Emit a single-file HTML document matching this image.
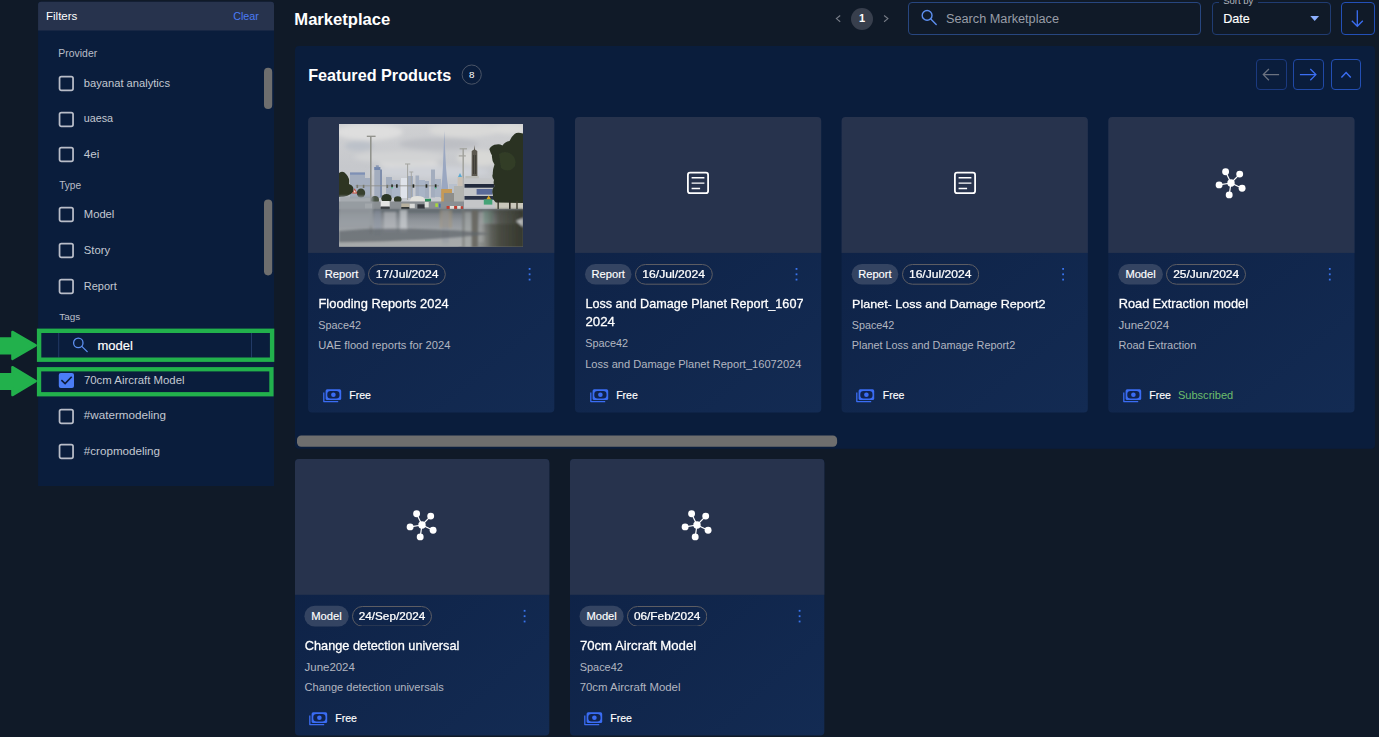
<!DOCTYPE html>
    <html><head><meta charset="utf-8"><title>Marketplace</title>
    <style>
    html,body{margin:0;padding:0;}
    body{width:1379px;height:737px;overflow:hidden;position:relative;background:#101a28;
     font-family:"Liberation Sans",sans-serif;}
    .t{position:absolute;white-space:nowrap;line-height:1;}
.m{-webkit-text-stroke:0.16px currentColor;}
.sb{-webkit-text-stroke:0.5px currentColor;}
.m2{-webkit-text-stroke:0.28px currentColor;}
    .abs{position:absolute;}
    .cb{position:absolute;width:15.2px;height:15.2px;box-sizing:border-box;border:1.6px solid #bfc3cb;border-radius:2.5px;}
    .card{position:absolute;border-radius:4px;overflow:hidden;background:linear-gradient(160deg,#0e2148 0%,#10254f 50%,#142b5c 100%);}
    .card .img{position:absolute;left:0;top:0;right:0;height:135.5px;background:#27334d;}
    .chip{position:absolute;height:20.7px;border-radius:10.4px;box-sizing:border-box;}
    .btn{position:absolute;box-sizing:border-box;border:1px solid #1f47a0;border-radius:4px;}
    </style></head><body>
    
<svg class="abs" style="left:0;top:0" width="1379" height="737" viewBox="0 0 1379 737"><defs><linearGradient id="cg10" gradientUnits="userSpaceOnUse" x1="308.1" y1="117.4" x2="554.3" y2="412.4"><stop offset="0" stop-color="#0d2043"/><stop offset="1" stop-color="#132b53"/></linearGradient><linearGradient id="cg15" gradientUnits="userSpaceOnUse" x1="575.0" y1="117.4" x2="821.2" y2="412.4"><stop offset="0" stop-color="#0d2043"/><stop offset="1" stop-color="#132b53"/></linearGradient><linearGradient id="cg20" gradientUnits="userSpaceOnUse" x1="841.6" y1="117.4" x2="1087.8" y2="412.4"><stop offset="0" stop-color="#0d2043"/><stop offset="1" stop-color="#132b53"/></linearGradient><linearGradient id="cg25" gradientUnits="userSpaceOnUse" x1="1108.3" y1="117.4" x2="1354.5" y2="412.4"><stop offset="0" stop-color="#0d2043"/><stop offset="1" stop-color="#132b53"/></linearGradient><linearGradient id="cg30" gradientUnits="userSpaceOnUse" x1="295.0" y1="459.3" x2="549.3" y2="735.6"><stop offset="0" stop-color="#0d2043"/><stop offset="1" stop-color="#132b53"/></linearGradient><linearGradient id="cg35" gradientUnits="userSpaceOnUse" x1="570.0" y1="459.3" x2="824.3" y2="735.6"><stop offset="0" stop-color="#0d2043"/><stop offset="1" stop-color="#132b53"/></linearGradient></defs><path d="M38.1 486.1 V4.8 a3 3 0 0 1 3 -3 H271 a3 3 0 0 1 3 3 V486.1 Z" fill="#0a1d3c"/>
<path d="M38.1 30.4 V4.8 a3 3 0 0 1 3 -3 H271 a3 3 0 0 1 3 3 V30.4 Z" fill="#27334d"/>
<rect x="264" y="67.8" width="8.2" height="41.2" rx="4.1" fill="#6e6e6e"/>
<rect x="264" y="199.5" width="8.2" height="75.9" rx="4.1" fill="#6e6e6e"/>
<rect x="58.2" y="333" width="1" height="24.5" fill="#223a66"/>
<rect x="251" y="333" width="1" height="24.5" fill="#223a66"/>
<rect x="58.8" y="373.1" width="15.2" height="14.9" rx="2" fill="#4b7df6"/>
<rect x="295" y="46" width="1080" height="402.8" rx="4" fill="#0a1d3c"/>
<circle cx="471.7" cy="74.6" r="9.6" fill="none" stroke="#4a5466" stroke-width="1"/>
<rect x="297" y="435.6" width="540.1" height="11.1" rx="4.2" fill="#6e6e6e"/>
<clipPath id="cc10"><rect x="308.1" y="117.0" width="246.2" height="295.4" rx="4"/></clipPath><g clip-path="url(#cc10)"><rect x="305.1" y="114.4" width="252.2" height="301.0" fill="url(#cg10)"/><rect x="305.1" y="114.4" width="252.2" height="138.5" fill="#27334d"/></g>
<rect x="318.1" y="263.9" width="46.9" height="20.7" rx="10.35" fill="#344462"/>
<rect x="528.6999999999999" y="268.0" width="1.8" height="1.8" fill="#3873ec"/>
<rect x="528.6999999999999" y="273.40000000000003" width="1.8" height="1.8" fill="#3873ec"/>
<rect x="528.6999999999999" y="278.70000000000005" width="1.8" height="1.8" fill="#3873ec"/>
<clipPath id="cc15"><rect x="575.0" y="117.0" width="246.2" height="295.4" rx="4"/></clipPath><g clip-path="url(#cc15)"><rect x="572.0" y="114.4" width="252.2" height="301.0" fill="url(#cg15)"/><rect x="572.0" y="114.4" width="252.2" height="138.5" fill="#27334d"/></g>
<rect x="585.0" y="263.9" width="46.5" height="20.7" rx="10.35" fill="#344462"/>
<rect x="795.6" y="268.0" width="1.8" height="1.8" fill="#3873ec"/>
<rect x="795.6" y="273.40000000000003" width="1.8" height="1.8" fill="#3873ec"/>
<rect x="795.6" y="278.70000000000005" width="1.8" height="1.8" fill="#3873ec"/>
<clipPath id="cc20"><rect x="841.6" y="117.0" width="246.2" height="295.4" rx="4"/></clipPath><g clip-path="url(#cc20)"><rect x="838.6" y="114.4" width="252.2" height="301.0" fill="url(#cg20)"/><rect x="838.6" y="114.4" width="252.2" height="138.5" fill="#27334d"/></g>
<rect x="851.6" y="263.9" width="46.7" height="20.7" rx="10.35" fill="#344462"/>
<rect x="1062.1999999999998" y="268.0" width="1.8" height="1.8" fill="#3873ec"/>
<rect x="1062.1999999999998" y="273.40000000000003" width="1.8" height="1.8" fill="#3873ec"/>
<rect x="1062.1999999999998" y="278.70000000000005" width="1.8" height="1.8" fill="#3873ec"/>
<clipPath id="cc25"><rect x="1108.3" y="117.0" width="246.2" height="295.4" rx="4"/></clipPath><g clip-path="url(#cc25)"><rect x="1105.3" y="114.4" width="252.2" height="301.0" fill="url(#cg25)"/><rect x="1105.3" y="114.4" width="252.2" height="138.5" fill="#27334d"/></g>
<rect x="1118.3" y="263.9" width="44.6" height="20.7" rx="10.35" fill="#344462"/>
<rect x="1328.8999999999999" y="268.0" width="1.8" height="1.8" fill="#3873ec"/>
<rect x="1328.8999999999999" y="273.40000000000003" width="1.8" height="1.8" fill="#3873ec"/>
<rect x="1328.8999999999999" y="278.70000000000005" width="1.8" height="1.8" fill="#3873ec"/>
<clipPath id="cc30"><rect x="295.0" y="458.90000000000003" width="254.3" height="276.7" rx="4"/></clipPath><g clip-path="url(#cc30)"><rect x="292.0" y="456.3" width="260.3" height="282.3" fill="url(#cg30)"/><rect x="292.0" y="456.3" width="260.3" height="138.5" fill="#27334d"/></g>
<rect x="304.40000000000003" y="605.8" width="44.3" height="20.7" rx="10.35" fill="#344462"/>
<rect x="523.6999999999999" y="609.9" width="1.8" height="1.8" fill="#3873ec"/>
<rect x="523.6999999999999" y="615.3000000000001" width="1.8" height="1.8" fill="#3873ec"/>
<rect x="523.6999999999999" y="620.6" width="1.8" height="1.8" fill="#3873ec"/>
<clipPath id="cc35"><rect x="570.0" y="458.90000000000003" width="254.3" height="276.7" rx="4"/></clipPath><g clip-path="url(#cc35)"><rect x="567.0" y="456.3" width="260.3" height="282.3" fill="url(#cg35)"/><rect x="567.0" y="456.3" width="260.3" height="138.5" fill="#27334d"/></g>
<rect x="579.5" y="605.8" width="44.2" height="20.7" rx="10.35" fill="#344462"/>
<rect x="798.6999999999999" y="609.9" width="1.8" height="1.8" fill="#3873ec"/>
<rect x="798.6999999999999" y="615.3000000000001" width="1.8" height="1.8" fill="#3873ec"/>
<rect x="798.6999999999999" y="620.6" width="1.8" height="1.8" fill="#3873ec"/></svg>
<div class="t" style="left:46.00px;top:11px;font-size:11.5px;color:#fff;font-weight:400;">Filters</div>
<div class="t" style="left:233.20px;top:11px;font-size:10.71px;color:#4b7bf5;font-weight:400;">Clear</div>
<div class="t" style="left:58.30px;top:49px;font-size:10.45px;color:#b9bec8;font-weight:400;">Provider</div>
<div class="t" style="left:59.20px;top:181px;font-size:10.1px;color:#b9bec8;font-weight:400;">Type</div>
<div class="t" style="left:59.20px;top:312px;font-size:9.94px;color:#b9bec8;font-weight:400;">Tags</div>
<svg class="abs" style="left:57px;top:73.8px" width="19" height="20" viewBox="0 0 19 20"><rect x="2.55" y="2.5" width="13.5" height="13.8" rx="1.8" fill="none" stroke="#b9bdc8" stroke-width="1.75"/></svg>
<div class="t" style="left:83.80px;top:78px;font-size:11.17px;color:#c3c8d1;font-weight:400;">bayanat analytics</div>
<svg class="abs" style="left:57px;top:109.5px" width="19" height="20" viewBox="0 0 19 20"><rect x="2.55" y="2.5" width="13.5" height="13.8" rx="1.8" fill="none" stroke="#b9bdc8" stroke-width="1.75"/></svg>
<div class="t" style="left:83.80px;top:113px;font-size:10.75px;color:#c3c8d1;font-weight:400;">uaesa</div>
<svg class="abs" style="left:57px;top:145.1px" width="19" height="20" viewBox="0 0 19 20"><rect x="2.55" y="2.5" width="13.5" height="13.8" rx="1.8" fill="none" stroke="#b9bdc8" stroke-width="1.75"/></svg>
<div class="t" style="left:83.80px;top:148px;font-size:11.69px;color:#c3c8d1;font-weight:400;">4ei</div>
<svg class="abs" style="left:57px;top:205.2px" width="19" height="20" viewBox="0 0 19 20"><rect x="2.55" y="2.5" width="13.5" height="13.8" rx="1.8" fill="none" stroke="#b9bdc8" stroke-width="1.75"/></svg>
<div class="t" style="left:83.80px;top:209px;font-size:11.23px;color:#c3c8d1;font-weight:400;">Model</div>
<svg class="abs" style="left:57px;top:241.0px" width="19" height="20" viewBox="0 0 19 20"><rect x="2.55" y="2.5" width="13.5" height="13.8" rx="1.8" fill="none" stroke="#b9bdc8" stroke-width="1.75"/></svg>
<div class="t" style="left:83.80px;top:245px;font-size:11.27px;color:#c3c8d1;font-weight:400;">Story</div>
<svg class="abs" style="left:57px;top:276.7px" width="19" height="20" viewBox="0 0 19 20"><rect x="2.55" y="2.5" width="13.5" height="13.8" rx="1.8" fill="none" stroke="#b9bdc8" stroke-width="1.75"/></svg>
<div class="t" style="left:83.80px;top:281px;font-size:10.99px;color:#c3c8d1;font-weight:400;">Report</div>
<svg class="abs" style="left:57px;top:406.5px" width="19" height="20" viewBox="0 0 19 20"><rect x="2.55" y="2.5" width="13.5" height="13.8" rx="1.8" fill="none" stroke="#b9bdc8" stroke-width="1.75"/></svg>
<div class="t" style="left:83.80px;top:409px;font-size:11.66px;color:#c3c8d1;font-weight:400;">#watermodeling</div>
<svg class="abs" style="left:57px;top:442.2px" width="19" height="20" viewBox="0 0 19 20"><rect x="2.55" y="2.5" width="13.5" height="13.8" rx="1.8" fill="none" stroke="#b9bdc8" stroke-width="1.75"/></svg>
<div class="t" style="left:83.80px;top:445px;font-size:11.63px;color:#c3c8d1;font-weight:400;">#cropmodeling</div>
<svg class="abs" style="left:70px;top:336px" width="20" height="20" viewBox="0 0 20 20"><circle cx="8.3" cy="6.9" r="4.7" fill="none" stroke="#5d8ff0" stroke-width="1.3"/><path d="M11.8 10.4 L17.2 15.6" stroke="#5d8ff0" stroke-width="1.3" stroke-linecap="round"/></svg>
<div class="t m" style="left:97.50px;top:339px;font-size:13.03px;color:#fff;font-weight:400;">model</div>
<svg class="abs" style="left:58.8px;top:373px" width="15.2" height="15" viewBox="0 0 15.2 15"><path d="M2.4 7.2 L6.1 10.6 L12.7 3.7" fill="none" stroke="#0c1a3a" stroke-width="1.6"/></svg>
<div class="t" style="left:83.90px;top:375px;font-size:11.4px;color:#c3c8d1;font-weight:400;">70cm Aircraft Model</div>
<div class="t" style="left:294.30px;top:12px;font-size:16.61px;color:#fff;font-weight:700;">Marketplace</div>
<svg class="abs" style="left:832px;top:10px" width="60" height="18" viewBox="0 0 60 18"><path d="M8.2 5.5 L4.4 8.6 L8.2 11.7" fill="none" stroke="#777c87" stroke-width="1.1"/><path d="M52.1 5.5 L55.9 8.6 L52.1 11.7" fill="none" stroke="#777c87" stroke-width="1.1"/></svg>
<div class="abs" style="left:850.9px;top:7.6px;width:22px;height:22px;border-radius:11px;background:#383f4d"></div>
<div class="t" style="left:858.90px;top:13px;font-size:11px;color:#fff;font-weight:700;">1</div>
<div class="abs" style="left:908.3px;top:1.7px;width:293px;height:33px;box-sizing:border-box;border:1px solid #27467f;border-radius:4px;"></div>
<svg class="abs" style="left:918px;top:6px" width="24" height="24" viewBox="0 0 24 24"><circle cx="9.1" cy="9.4" r="4.9" fill="none" stroke="#5d8ff0" stroke-width="1.4"/><path d="M12.8 13 L18.2 18.4" stroke="#5d8ff0" stroke-width="1.4" stroke-linecap="round"/></svg>
<div class="t" style="left:946.00px;top:13px;font-size:12.71px;color:#989da7;font-weight:400;">Search Marketplace</div>
<div class="abs" style="left:1212px;top:1.7px;width:119px;height:33px;box-sizing:border-box;border:1px solid #203c72;border-radius:4px;"></div>
<div class="abs" style="left:1219.4px;top:0;width:38.3px;height:4px;background:#101a28"></div>
<div class="t" style="left:1223.20px;top:-4px;font-size:9.5px;color:#b0b5be;font-weight:400;">Sort by</div>
<div class="t m" style="left:1223.20px;top:13px;font-size:12.64px;color:#fff;font-weight:400;">Date</div>
<svg class="abs" style="left:1308px;top:14px" width="14" height="10" viewBox="0 0 14 10"><path d="M2.3 2 L11.1 2 L6.7 7.1 Z" fill="#8db0ff"/></svg>
<div class="btn" style="left:1341px;top:1.7px;width:34px;height:33.7px;border-color:#2350b8"></div>
<svg class="abs" style="left:1345px;top:6px" width="26" height="26" viewBox="0 0 26 26"><path d="M12.3 4.3 L12.3 20.2 M6.8 14.8 L12.3 20.3 L17.8 14.8" fill="none" stroke="#3b6ef2" stroke-width="1.3"/></svg>
<div class="t" style="left:308.20px;top:67px;font-size:16.19px;color:#fff;font-weight:700;">Featured Products</div>
<div class="t" style="left:469.00px;top:70px;font-size:9.8px;color:#fff;font-weight:400;">8</div>
<div class="btn" style="left:1256px;top:59px;width:30.8px;height:31px;border-color:#1b3a80"></div>
<div class="btn" style="left:1293.1px;top:59px;width:30.8px;height:31px;border-color:#2049a6"></div>
<div class="btn" style="left:1330.5px;top:59px;width:30.6px;height:31px;border-color:#234fb4"></div>
<svg class="abs" style="left:1256px;top:59px" width="31" height="31" viewBox="0 0 31 31"><path d="M23.1 15.6 L7.3 15.6 M12.9 10 L7.3 15.6 L12.9 21.2" fill="none" stroke="#6b7280" stroke-width="1.3"/></svg>
<svg class="abs" style="left:1293px;top:59px" width="31" height="31" viewBox="0 0 31 31"><path d="M6.9 15.6 L22.9 15.6 M17.3 10 L22.9 15.6 L17.3 21.2" fill="none" stroke="#3b6ef2" stroke-width="1.3"/></svg>
<svg class="abs" style="left:1330.5px;top:59px" width="31" height="31" viewBox="0 0 31 31"><path d="M10.4 18.6 L15.1 13.6 L19.8 18.6" fill="none" stroke="#3b6ef2" stroke-width="1.4"/></svg>
<svg class="abs" style="left:339px;top:124px" width="184" height="122.8" viewBox="0 0 184 122.8" preserveAspectRatio="none">
<defs>
<linearGradient id="sky" x1="0" y1="0" x2="0" y2="1"><stop offset="0" stop-color="#cfd0d2"/><stop offset="0.5" stop-color="#c6c8cc"/><stop offset="1" stop-color="#c9ccd2"/></linearGradient>
<linearGradient id="wat" x1="0" y1="0" x2="0" y2="1"><stop offset="0" stop-color="#6a7075"/><stop offset="0.3" stop-color="#8f949a"/><stop offset="0.6" stop-color="#a3a7aa"/><stop offset="1" stop-color="#a9abab"/></linearGradient>
<linearGradient id="drk" x1="0" y1="0" x2="1" y2="0"><stop offset="0" stop-color="#45473d" stop-opacity="0"/><stop offset="0.35" stop-color="#45473d" stop-opacity="0.8"/><stop offset="1" stop-color="#33352b" stop-opacity="0.95"/></linearGradient>
<filter id="b1" x="-5%" y="-5%" width="110%" height="110%"><feGaussianBlur stdDeviation="0.45"/></filter>
<filter id="b2" x="-10%" y="-10%" width="120%" height="120%"><feGaussianBlur stdDeviation="2.2"/></filter>
<filter id="b3" x="-10%" y="-10%" width="120%" height="120%"><feGaussianBlur stdDeviation="1.1"/></filter>
<clipPath id="pc"><rect width="184" height="122.8"/></clipPath>
</defs>
<g clip-path="url(#pc)">
<rect width="184" height="86" fill="url(#sky)"/>
<!-- clouds -->
<g filter="url(#b2)">
<ellipse cx="30" cy="8" rx="34" ry="8" fill="#dedede"/><ellipse cx="70" cy="40" rx="30" ry="5" fill="#dadada"/>
<ellipse cx="100" cy="20" rx="40" ry="6" fill="#bdbfc4"/>
<ellipse cx="125" cy="6" rx="35" ry="7" fill="#d9d9d8"/>
<ellipse cx="60" cy="33" rx="45" ry="6" fill="#d2d3d4"/>
<ellipse cx="20" cy="22" rx="14" ry="5" fill="#bcc1c9"/>
<ellipse cx="140" cy="34" rx="22" ry="8" fill="#d8d8d6"/>
<ellipse cx="90" cy="48" rx="60" ry="6" fill="#cfd2d8"/>
<ellipse cx="170" cy="5" rx="18" ry="5" fill="#dcdcda"/>
</g>
<g filter="url(#b1)">
<!-- far skyline -->
<g fill="#a3adbe">
<rect x="11" y="48.5" width="15" height="26"/><rect x="26" y="54" width="5" height="20"/>
<rect x="35.3" y="43" width="6" height="31"/><rect x="41" y="45.5" width="2" height="28" fill="#7f8eac"/>
<rect x="47" y="53" width="6" height="20"/><rect x="53" y="56" width="8" height="18" fill="#aab5c8"/>
<rect x="62" y="54" width="6" height="20" fill="#dfe3ea"/><rect x="68" y="52" width="6" height="22"/>
<rect x="76.5" y="51.5" width="3.6" height="22"/><rect x="80" y="56" width="6" height="18" fill="#a9b4c6"/><rect x="86" y="57" width="4" height="17"/>
<rect x="92" y="45.5" width="4" height="28"/><rect x="96" y="55" width="6" height="18" fill="#aab4c4"/>
<polygon points="105.3,6.5 106.1,26 107,43 108,55 109,62 109.8,74 101.5,74 102.5,62 103.2,55 103.9,43 104.6,26" fill="#9aa7c1"/>
<rect x="110" y="60" width="8" height="14" fill="#b8c0cc"/>
</g>
<rect x="11" y="48.5" width="15" height="2.2" fill="#7e90b5"/><rect x="35.3" y="43" width="6" height="3" fill="#7387ad"/>
<rect x="36.8" y="41.3" width="3" height="2" fill="#8b99b4"/>
<!-- lamp posts -->
<g stroke="#8f908a" fill="none">
<path d="M31.8 12.3 V82" stroke-width="1.5"/><path d="M27.8 12.3 H36.6" stroke-width="1.3"/>
<path d="M68.6 40 V76" stroke-width="1" stroke="#a3a49f"/><path d="M66 40 H71.3" stroke-width="1" stroke="#a3a49f"/>
<path d="M72.3 48 V76" stroke-width="0.9" stroke="#a3a49f"/><path d="M70.3 48 H74.3" stroke-width="0.9" stroke="#a3a49f"/>
<path d="M124.2 24.6 V84" stroke-width="1.5" stroke="#a2a39d"/><path d="M120.6 24.8 H128" stroke-width="1.2" stroke="#a2a39d"/><path d="M119.8 31.9 H126.8" stroke-width="1.2" stroke="#a2a39d"/>
</g>
<!-- dark tower -->
<polygon points="135.5,21 136,25.6 138.3,27 138.4,52 132.6,52 132.7,27 135,25.6" fill="#5b584f"/>
<rect x="134" y="31" width="1.2" height="19" fill="#3f3d38"/><rect x="136" y="31" width="1.2" height="19" fill="#3f3d38"/>
<!-- dome -->
<polygon points="121,49 123,53 119,53" fill="#58a9d4"/><rect x="118.6" y="53" width="5" height="9" fill="#c9c0b4"/>
<!-- building right -->
<rect x="126.4" y="52" width="13.4" height="3" fill="#bbbcb8"/>
<rect x="124.6" y="54.3" width="34" height="30" fill="#c4c6c8"/>
<rect x="125.5" y="60" width="30" height="3.7" fill="#222b3c"/>
<rect x="125.5" y="72" width="30" height="3.7" fill="#2a3346"/>
<rect x="137.6" y="65" width="16" height="5.6" fill="#5a6a98"/>
<rect x="156" y="76" width="28" height="9" fill="#c9c7bb"/>
<rect x="144.8" y="75.4" width="8.5" height="5.2" fill="#44a377"/>
<polygon points="149.7,71.4 152,75.2 147.4,75.2" fill="#d9a520"/>
<!-- orange building -->
<rect x="102.2" y="65" width="10.8" height="18" fill="#c69a57"/><rect x="104.9" y="69" width="10.4" height="14" fill="#8e8e8a"/>
<rect x="115" y="62" width="9" height="22" fill="#b3b4b0"/>
<!-- left trees -->
<path d="M0 49 Q4 46 7 50 Q11 54 10 60 Q16 62 14 68 Q10 73 0 73 Z" fill="#2d3524"/>
<ellipse cx="22" cy="69" rx="4.2" ry="4.6" fill="#39412f"/>
<polygon points="15.7,64.2 18.3,69.4 13,69.4" fill="#c44a3a"/><polygon points="15.7,66 17,68.6 14.4,68.6" fill="#e7e2d6"/>
<!-- traffic signal bar -->
<path d="M16.6 61.8 H100" stroke="#8c8d86" stroke-width="0.8"/>
<g fill="#22261f"><rect x="57" y="60.3" width="1.7" height="3.4"/><rect x="73.6" y="60.3" width="1.7" height="3.4"/><rect x="86.6" y="60.3" width="1.7" height="3.4"/><rect x="95.8" y="60.3" width="1.7" height="3.4"/><rect x="52.3" y="60.4" width="1.5" height="3"/><rect x="17.5" y="60.8" width="1.6" height="3.2" fill="#76776c"/><rect x="23.8" y="60.8" width="1.6" height="3.2" fill="#76776c"/><rect x="47.5" y="60.8" width="1.6" height="3.2" fill="#76776c"/></g>
<rect x="52.4" y="63.2" width="1.3" height="1.2" fill="#3fd08a"/><rect x="96" y="63.5" width="1.3" height="1.2" fill="#3fd08a"/>
<!-- mid trees -->
<ellipse cx="47.5" cy="74.5" rx="5.2" ry="4.6" fill="#2c3526"/><ellipse cx="58.7" cy="75.5" rx="3.8" ry="3.2" fill="#303a2a"/>
<ellipse cx="36" cy="76" rx="4" ry="4" fill="#4b5446"/>
<!-- tent -->
<path d="M70.4 77.5 L72.5 73.3 Q78.5 70.8 84.5 73.3 L86.6 77.5 Z" fill="#e2e1dc"/>
<rect x="86" y="74.8" width="6" height="2.9" fill="#2f8f5c"/>
<!-- ground strip / vehicles -->
<rect x="0" y="77.5" width="125" height="8" fill="#8a8f93"/>
<rect x="41.7" y="77" width="9" height="6" fill="#e4e5e4"/><rect x="41.7" y="82.5" width="9" height="3.6" fill="#383c40"/>
<rect x="62.3" y="79.5" width="8.2" height="4" fill="#b7b09e"/><rect x="62.3" y="83" width="8.2" height="3" fill="#2d3033"/>
<rect x="70.6" y="79.7" width="5.2" height="4.5" fill="#d9dad8"/>
<rect x="78.4" y="80.3" width="7.4" height="4.4" fill="#33363a"/>
<rect x="85.7" y="78" width="4" height="5.4" fill="#dcdddb"/>
<rect x="26" y="79.5" width="7" height="5" fill="#b9bcbc"/>
<rect x="96.3" y="79.3" width="2.6" height="3.6" fill="#a6d93a"/><rect x="100" y="79.6" width="1.6" height="4" fill="#4b6ea8"/>
<rect x="107.6" y="82" width="3.2" height="3" fill="#c63b2d"/><rect x="110.8" y="82" width="4.4" height="3" fill="#e6e3dd"/><rect x="115.2" y="82" width="3" height="3" fill="#c63b2d"/><rect x="118.2" y="82" width="3.6" height="3" fill="#e6e3dd"/><rect x="121.8" y="82.3" width="2.2" height="2.7" fill="#c63b2d"/>
</g>
<!-- right tree -->
<g filter="url(#b1)">
<path d="M184 9.5 Q178 8 175.6 10 Q172 13 170.5 17 Q166 17.5 163.5 21.5 Q160 19.5 157.5 20.5 Q153 20.5 150.3 25 Q151.5 29 153 31.5 Q152.5 36 155.5 40.5 Q153.5 46 153.8 50 Q152.5 53 155 56 Q154 60 155.6 62 Q152 66 154 71 Q153.5 76 157 78.5 L184 79 Z" fill="#2a3322"/>
<path d="M160 30 Q166 26 172 30 Q178 34 176 42 Q170 50 162 44 Z" fill="#323c28"/>
<rect x="158.5" y="76" width="1.3" height="9" fill="#2b2a22"/><rect x="170" y="76" width="1.6" height="9" fill="#2b2a22"/><rect x="177.3" y="77" width="1.4" height="8" fill="#3a372c"/>
</g>
<!-- water -->
<rect x="0" y="85.2" width="184" height="38" fill="url(#wat)"/>
<g filter="url(#b3)">
<rect x="0" y="85.2" width="184" height="3.4" fill="#636a70" opacity="0.8"/>
<rect x="124" y="86" width="30" height="40" fill="#6c6e69" opacity="0.38"/><rect x="126" y="88" width="6" height="36" fill="#c9cacb" opacity="0.35"/><rect x="140" y="88" width="5" height="30" fill="#c9cacb" opacity="0.3"/>
<rect x="132.8" y="86" width="6" height="40" fill="#67665f" opacity="0.9"/>
<rect x="123.3" y="86" width="1.8" height="40" fill="#7b7c78" opacity="0.7"/>
<rect x="101" y="86" width="12" height="18" fill="#a99776" opacity="0.45"/>
<rect x="144" y="87" width="10" height="12" fill="#6fa088" opacity="0.35"/>
<rect x="103" y="86" width="7" height="40" fill="#8f959d" opacity="0.45"/>
<rect x="35" y="86" width="7" height="26" fill="#8f98a8" opacity="0.5"/>
<rect x="61" y="86" width="7" height="22" fill="#d6d9dc" opacity="0.6"/>
<rect x="45" y="88" width="12" height="20" fill="#c3c6c9" opacity="0.5"/>
<rect x="30.8" y="86" width="2" height="24" fill="#7c7f80" opacity="0.6"/>
<rect x="0" y="72" width="34" height="30" fill="#9ba0a6" opacity="0.75"/>
<rect x="147" y="85.5" width="38" height="40" fill="url(#drk)"/>
<rect x="140" y="100" width="45" height="25" fill="url(#drk)" opacity="0.8"/>
<path d="M0 107 Q40 103 95 105.5 Q140 107 150 110 Q90 117 0 118.5 Z" fill="#5f656b" opacity="0.72"/>
<rect x="0" y="118.5" width="120" height="5" fill="#a6a9ab" opacity="0.7"/>
<path d="M177 97 L184 94 V103 Z" fill="#b4b6b5"/>
</g>
</g>
</svg>
<div class="t m" style="left:324.80px;top:269px;font-size:11.16px;color:#fff;font-weight:400;">Report</div><svg class="abs" style="left:368.3px;top:263.9px" width="77.8" height="20.7"><rect x="0.5" y="0.5" width="76.8" height="19.7" rx="9.85" fill="none" stroke="#5d5d63" stroke-width="1"/></svg><div class="t m2" style="left:375.70px;top:268px;font-size:12.18px;color:#fff;font-weight:400;transform:scaleY(0.89);transform-origin:0 10px;">17/Jul/2024</div><div class="t m2" style="left:318.50px;top:298px;font-size:12.89px;color:#fff;font-weight:400;transform:scaleY(0.94);transform-origin:0 10px;">Flooding Reports 2024</div><div class="t" style="left:318.30px;top:320px;font-size:10.84px;color:#b2b6c0;font-weight:400;">Space42</div><div class="t" style="left:318.30px;top:340px;font-size:11.17px;color:#b2b6c0;font-weight:400;">UAE flood reports for 2024</div><svg class="abs" style="left:322.7px;top:388.79999999999995px" width="20" height="15" viewBox="0 0 20 15"><path d="M0.8 3.6 V12.6 H15.2" fill="none" stroke="#3a6cf3" stroke-width="1.3" stroke-linejoin="round"/><rect x="2.6" y="0.3" width="15.6" height="10.8" rx="1.6" fill="#3a6cf3"/><rect x="4.3" y="1.9" width="12.2" height="7.6" rx="3.2" fill="#10234d"/><circle cx="10.4" cy="5.7" r="2.3" fill="#3a6cf3"/></svg><div class="t m" style="left:349.30px;top:390px;font-size:10.5px;color:#fff;font-weight:400;">Free</div>
<svg class="abs" style="left:685.1px;top:169.5px" width="26" height="26" viewBox="0 0 26 26"><rect x="2.9" y="2.7" width="20.2" height="20.5" rx="2.2" fill="none" stroke="#fff" stroke-width="1.8"/><path d="M6.6 7.8 H19.4 M6.6 13.1 H19.4 M6.6 18.5 H15.1" stroke="#fff" stroke-width="1.45"/></svg><div class="t m" style="left:591.55px;top:269px;font-size:11.13px;color:#fff;font-weight:400;">Report</div><svg class="abs" style="left:634.8px;top:263.9px" width="77.8" height="20.7"><rect x="0.5" y="0.5" width="76.8" height="19.7" rx="9.85" fill="none" stroke="#5d5d63" stroke-width="1"/></svg><div class="t m2" style="left:642.30px;top:268px;font-size:12.14px;color:#fff;font-weight:400;transform:scaleY(0.89);transform-origin:0 10px;">16/Jul/2024</div><div class="t m2" style="left:585.40px;top:298px;font-size:12.61px;color:#fff;font-weight:400;transform:scaleY(0.94);transform-origin:0 10px;">Loss and Damage Planet Report_1607</div><div class="t m2" style="left:585.40px;top:315px;font-size:13.26px;color:#fff;font-weight:400;transform:scaleY(0.94);transform-origin:0 11px;">2024</div><div class="t" style="left:585.20px;top:338px;font-size:10.87px;color:#b2b6c0;font-weight:400;">Space42</div><div class="t" style="left:585.20px;top:359px;font-size:11.08px;color:#b2b6c0;font-weight:400;">Loss and Damage Planet Report_16072024</div><svg class="abs" style="left:589.6px;top:388.79999999999995px" width="20" height="15" viewBox="0 0 20 15"><path d="M0.8 3.6 V12.6 H15.2" fill="none" stroke="#3a6cf3" stroke-width="1.3" stroke-linejoin="round"/><rect x="2.6" y="0.3" width="15.6" height="10.8" rx="1.6" fill="#3a6cf3"/><rect x="4.3" y="1.9" width="12.2" height="7.6" rx="3.2" fill="#10234d"/><circle cx="10.4" cy="5.7" r="2.3" fill="#3a6cf3"/></svg><div class="t m" style="left:616.20px;top:390px;font-size:10.5px;color:#fff;font-weight:400;">Free</div>
<svg class="abs" style="left:951.7px;top:169.5px" width="26" height="26" viewBox="0 0 26 26"><rect x="2.9" y="2.7" width="20.2" height="20.5" rx="2.2" fill="none" stroke="#fff" stroke-width="1.8"/><path d="M6.6 7.8 H19.4 M6.6 13.1 H19.4 M6.6 18.5 H15.1" stroke="#fff" stroke-width="1.45"/></svg><div class="t m" style="left:858.30px;top:269px;font-size:11.09px;color:#fff;font-weight:400;">Report</div><svg class="abs" style="left:901.6px;top:263.9px" width="77.2" height="20.7"><rect x="0.5" y="0.5" width="76.2" height="19.7" rx="9.85" fill="none" stroke="#5d5d63" stroke-width="1"/></svg><div class="t m2" style="left:908.90px;top:268px;font-size:12.11px;color:#fff;font-weight:400;transform:scaleY(0.89);transform-origin:0 10px;">16/Jul/2024</div><div class="t m2" style="left:852.00px;top:298px;font-size:12.57px;color:#fff;font-weight:400;transform:scaleY(0.94);transform-origin:0 10px;">Planet- Loss and Damage Report2</div><div class="t" style="left:851.80px;top:320px;font-size:10.77px;color:#b2b6c0;font-weight:400;">Space42</div><div class="t" style="left:851.80px;top:340px;font-size:10.85px;color:#b2b6c0;font-weight:400;">Planet Loss and Damage Report2</div><svg class="abs" style="left:856.2px;top:388.79999999999995px" width="20" height="15" viewBox="0 0 20 15"><path d="M0.8 3.6 V12.6 H15.2" fill="none" stroke="#3a6cf3" stroke-width="1.3" stroke-linejoin="round"/><rect x="2.6" y="0.3" width="15.6" height="10.8" rx="1.6" fill="#3a6cf3"/><rect x="4.3" y="1.9" width="12.2" height="7.6" rx="3.2" fill="#10234d"/><circle cx="10.4" cy="5.7" r="2.3" fill="#3a6cf3"/></svg><div class="t m" style="left:882.80px;top:390px;font-size:10.5px;color:#fff;font-weight:400;">Free</div>
<svg class="abs" style="left:1213.1px;top:164.60000000000002px" width="36" height="36" viewBox="-18 -18 36 36"><line x1="0" y1="0" x2="-5.4" y2="-11.2" stroke="#fff" stroke-width="1.2"/><line x1="0" y1="0" x2="8.7" y2="-8.9" stroke="#fff" stroke-width="1.2"/><line x1="0" y1="0" x2="-11.9" y2="1.9" stroke="#fff" stroke-width="1.2"/><line x1="0" y1="0" x2="11.1" y2="5.3" stroke="#fff" stroke-width="1.2"/><line x1="0" y1="0" x2="-1.8" y2="11.9" stroke="#fff" stroke-width="1.2"/><circle cx="-5.4" cy="-11.2" r="3.45" fill="#fff"/><circle cx="8.7" cy="-8.9" r="3.45" fill="#fff"/><circle cx="-11.9" cy="1.9" r="3.45" fill="#fff"/><circle cx="11.1" cy="5.3" r="3.45" fill="#fff"/><circle cx="-1.8" cy="11.9" r="3.45" fill="#fff"/><circle cx="0" cy="0" r="3.7" fill="#fff"/></svg><div class="t m" style="left:1125.45px;top:269px;font-size:11.12px;color:#fff;font-weight:400;">Model</div><svg class="abs" style="left:1166.1999999999998px;top:263.9px" width="80" height="20.7"><rect x="0.5" y="0.5" width="79" height="19.7" rx="9.85" fill="none" stroke="#5d5d63" stroke-width="1"/></svg><div class="t m2" style="left:1173.20px;top:268px;font-size:11.99px;color:#fff;font-weight:400;transform:scaleY(0.89);transform-origin:0 10px;">25/Jun/2024</div><div class="t m2" style="left:1118.70px;top:298px;font-size:12.79px;color:#fff;font-weight:400;transform:scaleY(0.94);transform-origin:0 10px;">Road Extraction model</div><div class="t" style="left:1118.50px;top:320px;font-size:11.52px;color:#b2b6c0;font-weight:400;">June2024</div><div class="t" style="left:1118.50px;top:340px;font-size:10.93px;color:#b2b6c0;font-weight:400;">Road Extraction</div><svg class="abs" style="left:1122.7px;top:388.79999999999995px" width="20" height="15" viewBox="0 0 20 15"><path d="M0.8 3.6 V12.6 H15.2" fill="none" stroke="#3a6cf3" stroke-width="1.3" stroke-linejoin="round"/><rect x="2.6" y="0.3" width="15.6" height="10.8" rx="1.6" fill="#3a6cf3"/><rect x="4.3" y="1.9" width="12.2" height="7.6" rx="3.2" fill="#10234d"/><circle cx="10.4" cy="5.7" r="2.3" fill="#3a6cf3"/></svg><div class="t m" style="left:1149.30px;top:390px;font-size:10.5px;color:#fff;font-weight:400;">Free</div><div class="t" style="left:1177.90px;top:390px;font-size:11.07px;color:#6cbd6c;font-weight:400;">Subscribed</div>
<svg class="abs" style="left:403.84999999999997px;top:506.5px" width="36" height="36" viewBox="-18 -18 36 36"><line x1="0" y1="0" x2="-5.4" y2="-11.2" stroke="#fff" stroke-width="1.2"/><line x1="0" y1="0" x2="8.7" y2="-8.9" stroke="#fff" stroke-width="1.2"/><line x1="0" y1="0" x2="-11.9" y2="1.9" stroke="#fff" stroke-width="1.2"/><line x1="0" y1="0" x2="11.1" y2="5.3" stroke="#fff" stroke-width="1.2"/><line x1="0" y1="0" x2="-1.8" y2="11.9" stroke="#fff" stroke-width="1.2"/><circle cx="-5.4" cy="-11.2" r="3.45" fill="#fff"/><circle cx="8.7" cy="-8.9" r="3.45" fill="#fff"/><circle cx="-11.9" cy="1.9" r="3.45" fill="#fff"/><circle cx="11.1" cy="5.3" r="3.45" fill="#fff"/><circle cx="-1.8" cy="11.9" r="3.45" fill="#fff"/><circle cx="0" cy="0" r="3.7" fill="#fff"/></svg><div class="t m" style="left:311.30px;top:611px;font-size:11.2px;color:#fff;font-weight:400;">Model</div><svg class="abs" style="left:352.00000000000006px;top:605.8px" width="80" height="20.7"><rect x="0.5" y="0.5" width="79" height="19.7" rx="9.85" fill="none" stroke="#5d5d63" stroke-width="1"/></svg><div class="t m2" style="left:358.80px;top:610px;font-size:11.71px;color:#fff;font-weight:400;transform:scaleY(0.89);transform-origin:0 10px;">24/Sep/2024</div><div class="t m2" style="left:304.80px;top:640px;font-size:12.76px;color:#fff;font-weight:400;transform:scaleY(0.94);transform-origin:0 10px;">Change detection universal</div><div class="t" style="left:304.60px;top:662px;font-size:11.45px;color:#b2b6c0;font-weight:400;">June2024</div><div class="t" style="left:304.60px;top:682px;font-size:11.04px;color:#b2b6c0;font-weight:400;">Change detection universals</div><svg class="abs" style="left:308.7px;top:712.1999999999999px" width="20" height="15" viewBox="0 0 20 15"><path d="M0.8 3.6 V12.6 H15.2" fill="none" stroke="#3a6cf3" stroke-width="1.3" stroke-linejoin="round"/><rect x="2.6" y="0.3" width="15.6" height="10.8" rx="1.6" fill="#3a6cf3"/><rect x="4.3" y="1.9" width="12.2" height="7.6" rx="3.2" fill="#10234d"/><circle cx="10.4" cy="5.7" r="2.3" fill="#3a6cf3"/></svg><div class="t m" style="left:335.30px;top:713px;font-size:10.5px;color:#fff;font-weight:400;">Free</div>
<svg class="abs" style="left:678.85px;top:506.5px" width="36" height="36" viewBox="-18 -18 36 36"><line x1="0" y1="0" x2="-5.4" y2="-11.2" stroke="#fff" stroke-width="1.2"/><line x1="0" y1="0" x2="8.7" y2="-8.9" stroke="#fff" stroke-width="1.2"/><line x1="0" y1="0" x2="-11.9" y2="1.9" stroke="#fff" stroke-width="1.2"/><line x1="0" y1="0" x2="11.1" y2="5.3" stroke="#fff" stroke-width="1.2"/><line x1="0" y1="0" x2="-1.8" y2="11.9" stroke="#fff" stroke-width="1.2"/><circle cx="-5.4" cy="-11.2" r="3.45" fill="#fff"/><circle cx="8.7" cy="-8.9" r="3.45" fill="#fff"/><circle cx="-11.9" cy="1.9" r="3.45" fill="#fff"/><circle cx="11.1" cy="5.3" r="3.45" fill="#fff"/><circle cx="-1.8" cy="11.9" r="3.45" fill="#fff"/><circle cx="0" cy="0" r="3.7" fill="#fff"/></svg><div class="t m" style="left:586.40px;top:611px;font-size:11.16px;color:#fff;font-weight:400;">Model</div><svg class="abs" style="left:627.0px;top:605.8px" width="80.3" height="20.7"><rect x="0.5" y="0.5" width="79.3" height="19.7" rx="9.85" fill="none" stroke="#5d5d63" stroke-width="1"/></svg><div class="t m2" style="left:633.90px;top:611px;font-size:11.84px;color:#fff;font-weight:400;transform:scaleY(0.89);transform-origin:0 9px;">06/Feb/2024</div><div class="t m2" style="left:579.90px;top:639px;font-size:13.17px;color:#fff;font-weight:400;transform:scaleY(0.94);transform-origin:0 11px;">70cm Aircraft Model</div><div class="t" style="left:579.70px;top:662px;font-size:10.94px;color:#b2b6c0;font-weight:400;">Space42</div><div class="t" style="left:579.70px;top:682px;font-size:11.41px;color:#b2b6c0;font-weight:400;">70cm Aircraft Model</div><svg class="abs" style="left:583.6999999999999px;top:712.1999999999999px" width="20" height="15" viewBox="0 0 20 15"><path d="M0.8 3.6 V12.6 H15.2" fill="none" stroke="#3a6cf3" stroke-width="1.3" stroke-linejoin="round"/><rect x="2.6" y="0.3" width="15.6" height="10.8" rx="1.6" fill="#3a6cf3"/><rect x="4.3" y="1.9" width="12.2" height="7.6" rx="3.2" fill="#10234d"/><circle cx="10.4" cy="5.7" r="2.3" fill="#3a6cf3"/></svg><div class="t m" style="left:610.30px;top:713px;font-size:10.5px;color:#fff;font-weight:400;">Free</div>
<svg class="abs" style="left:0;top:0" width="1379" height="737" viewBox="0 0 1379 737"><rect x="39.1" y="330.8" width="233" height="28.9" fill="none" stroke="#22b14c" stroke-width="4.4"/>
<rect x="39.05" y="369.25" width="232.4" height="25" fill="none" stroke="#22b14c" stroke-width="4.3"/>
<path d="M-4 338.4 L12.399999999999999 338.4 L12.399999999999999 331.9 L35.699999999999996 345.4 L12.399999999999999 358.9 L12.399999999999999 353.40000000000003 L-4 353.40000000000003 Z" fill="#22b14c" stroke="#22b14c" stroke-width="2.4" stroke-linejoin="round"/>
<path d="M-4 374.2 L12.399999999999999 374.2 L12.399999999999999 367.1 L35.699999999999996 381.1 L12.399999999999999 395.1 L12.399999999999999 388.7 L-4 388.7 Z" fill="#22b14c" stroke="#22b14c" stroke-width="2.4" stroke-linejoin="round"/></svg></body></html>
